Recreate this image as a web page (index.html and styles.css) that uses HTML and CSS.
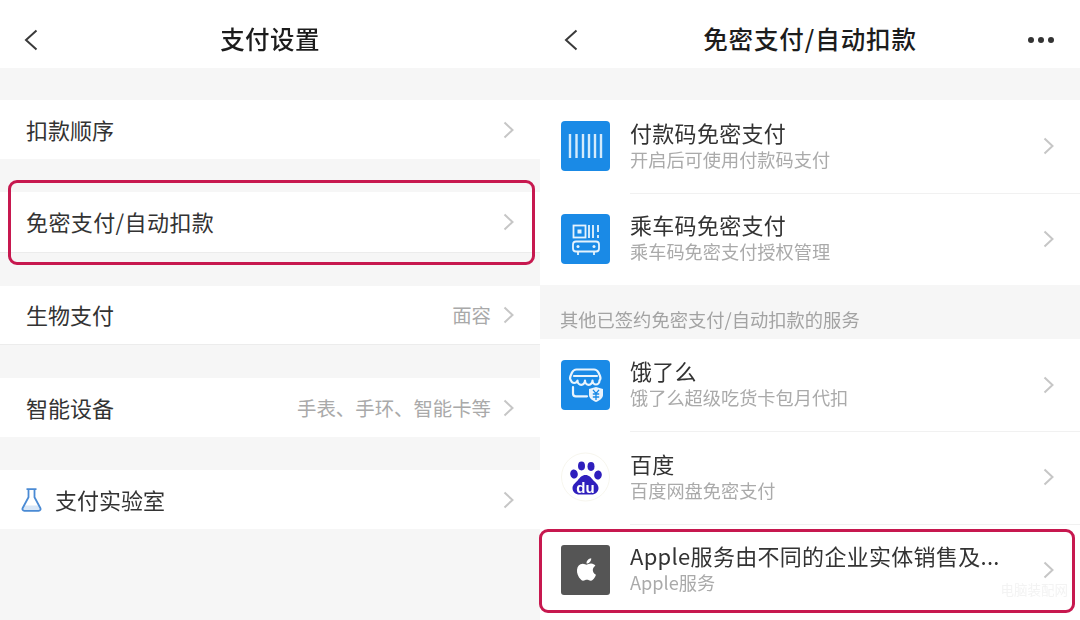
FILE: index.html
```html
<!DOCTYPE html>
<html lang="zh-CN">
<head>
    <meta charset="UTF-8">
    <meta name="viewport" content="width=device-width, initial-scale=1.0">
    <title>支付设置</title>
    <link rel="stylesheet" href="styles.css">
</head>
<body>
    <main class="screens">
        <section class="panel">
            <header class="nav">
                <svg class="nav__back" viewBox="0 0 14 22"><path d="M12.5 1.5 2 11l10.5 9.5"/></svg>
                <h1 class="nav__title">支付设置</h1>
            </header>
            <div class="settings">
                <div class="row">
                    <span class="row__label">扣款顺序</span>
                    <svg class="chevron" viewBox="0 0 11 18"><path d="M1.5 1.5 9.5 9l-8 7.5"/></svg>
                </div>
                <div class="row row--line row--marked">
                    <span class="row__label row__label--wide">免密支付/自动扣款</span>
                    <svg class="chevron" viewBox="0 0 11 18"><path d="M1.5 1.5 9.5 9l-8 7.5"/></svg>
                    <div class="highlight highlight--left"></div>
                </div>
                <div class="row row--line">
                    <span class="row__label">生物支付</span>
                    <span class="row__value">面容</span>
                    <svg class="chevron" viewBox="0 0 11 18"><path d="M1.5 1.5 9.5 9l-8 7.5"/></svg>
                </div>
                <div class="row">
                    <span class="row__label">智能设备</span>
                    <span class="row__value">手表、手环、智能卡等</span>
                    <svg class="chevron" viewBox="0 0 11 18"><path d="M1.5 1.5 9.5 9l-8 7.5"/></svg>
                </div>
                <div class="row row--lab">
                    <svg class="flask" viewBox="0 0 21 24">
                        <path class="flask__fill" d="M3 17.5h15l1.5 4.5h-18z"/>
                        <path class="flask__line" d="M5.5 1.2h10M7.5 1.2v8L1.7 20c-.7 1.4 0 2.8 1.7 2.8h14.2c1.700 0 2.400-1.400 1.700-2.800L13.500 9.200v-8"/>
                    </svg>
                    <span class="row__label">支付实验室</span>
                    <svg class="chevron" viewBox="0 0 11 18"><path d="M1.5 1.5 9.5 9l-8 7.5"/></svg>
                </div>
            </div>
        </section>

        <section class="panel">
            <header class="nav">
                <svg class="nav__back" viewBox="0 0 14 22"><path d="M12.5 1.5 2 11l10.5 9.5"/></svg>
                <h1 class="nav__title nav__title--wide">免密支付/自动扣款</h1>
                <div class="nav__more"><i></i><i></i><i></i></div>
            </header>
            <div class="services services--first">
                <div class="service">
                    <svg class="service__icon" viewBox="0 0 49 50">
                        <rect width="49" height="50" rx="4" fill="#1a8ae6"/>
                        <path d="M9 13v24M15.500 13v24M22 13v24M28 13v24M34 13v24M40 13v24" stroke="#d4ebfb" stroke-width="2.400" fill="none"/>
                    </svg>
                    <div class="service__text">
                        <div class="service__name">付款码免密支付</div>
                        <div class="service__sub">开启后可使用付款码支付</div>
                    </div>
                    <svg class="chevron" viewBox="0 0 11 18"><path d="M1.5 1.5 9.5 9l-8 7.5"/></svg>
                </div>
                <div class="service">
                    <svg class="service__icon" viewBox="0 0 49 50">
                        <rect width="49" height="50" rx="4" fill="#1a8ae6"/>
                        <g fill="none" stroke="#e6f3fd" stroke-width="1.800">
                            <rect x="12.500" y="11.500" width="12" height="12"/>
                            <path d="M28 11v13M32 11v13M37 11v7M37 21v3"/>
                            <path d="M15 27.500h20c2 0 3 1 3 3v4c0 2-1 3-3 3H15c-2 0-3-1-3-3v-4c0-2 1-3 3-3z"/>
                            <path d="M17 38v3M33 38v3"/>
                        </g>
                        <rect x="16.500" y="15.500" width="4" height="4" fill="#e6f3fd"/>
                        <circle cx="17" cy="32.500" r="1.500" fill="#e6f3fd"/>
                        <circle cx="33" cy="32.500" r="1.500" fill="#e6f3fd"/>
                    </svg>
                    <div class="service__text">
                        <div class="service__name">乘车码免密支付</div>
                        <div class="service__sub">乘车码免密支付授权管理</div>
                    </div>
                    <svg class="chevron" viewBox="0 0 11 18"><path d="M1.5 1.5 9.5 9l-8 7.5"/></svg>
                </div>
            </div>
            <div class="caption">其他已签约免密支付/自动扣款的服务</div>
            <div class="services services--fill">
                <div class="service">
                    <svg class="service__icon" viewBox="0 0 49 50">
                        <rect width="49" height="50" rx="4" fill="#1a8ae6"/>
                        <g fill="none" stroke="#e9f4fd" stroke-width="2.200" stroke-linejoin="round" stroke-linecap="round">
                            <path d="M16 9.500h17c2 0 3.500 1.200 4.500 3l1.500 3.500c.8 2 0 4-.5 4.500a3.500 4 0 0 1-7 0 3.500 4 0 0 1-7.500 0 3.500 4 0 0 1-7.500 0 3.500 4 0 0 1-6.500 0c-.5-.5-1.300-2.500-.5-4.500l1.500-3.500c1-1.800 2.500-3 4.500-3z"/>
                            <path d="M13 16h23"/>
                            <path d="M12 27v6.500c0 1.800 1 2.800 2.800 2.800H26"/>
                        </g>
                        <path d="M28 29 35 27l7 2v6c0 3.500-3.500 5.500-7 7-3.500-1.500-7-3.500-7-7z" fill="#e9f4fd"/>
                        <path d="M32 29.800 35 33.500l3-3.700M31.800 34h6.400M31.800 37h6.400M35 33.500V40" fill="none" stroke="#1a8ae6" stroke-width="1.300"/>
                    </svg>
                    <div class="service__text">
                        <div class="service__name">饿了么</div>
                        <div class="service__sub">饿了么超级吃货卡包月代扣</div>
                    </div>
                    <svg class="chevron" viewBox="0 0 11 18"><path d="M1.5 1.5 9.5 9l-8 7.5"/></svg>
                </div>
                <div class="service">
                    <svg class="service__icon" viewBox="0 0 49 50">
                        <circle cx="24.500" cy="25" r="24" fill="#fff" stroke="#f7f6ee"/>
                        <g fill="#2f1fbd">
                            <ellipse cx="13" cy="22" rx="3.800" ry="4.600" transform="rotate(-12 13 22)"/>
                            <ellipse cx="20.500" cy="14" rx="3.500" ry="4.400"/>
                            <ellipse cx="30" cy="14.500" rx="3.500" ry="4.400"/>
                            <ellipse cx="37" cy="23" rx="3.800" ry="4.600" transform="rotate(12 37 23)"/>
                            <path d="M24.500 23c3.500 0 5.500 2.500 7.500 5 2.500 2.500 5.500 4.500 5.500 8 0 4-3 6.500-7 6.500h-12c-4 0-7-2.500-7-6.500 0-3.500 3.500-5.500 5.500-8 2-2.500 4-5 7.500-5z"/>
                        </g>
                        <text class="baidu-du" x="24.500" y="40.500" text-anchor="middle">du</text>
                    </svg>
                    <div class="service__text">
                        <div class="service__name">百度</div>
                        <div class="service__sub">百度网盘免密支付</div>
                    </div>
                    <svg class="chevron" viewBox="0 0 11 18"><path d="M1.5 1.5 9.5 9l-8 7.5"/></svg>
                </div>
                <div class="service">
                    <svg class="service__icon" viewBox="0 0 49 50">
                        <rect width="49" height="50" rx="3" fill="#555"/>
                        <svg x="10.500" y="9.500" width="30" height="30" viewBox="0 0 24 24"><path fill="#fff" d="M17.050 20.280c-.98.95-2.050.8-3.080.35-1.090-.46-2.090-.48-3.240 0-1.440.62-2.200.44-3.060-.35C2.790 15.250 3.510 7.590 9.050 7.310c1.350.07 2.290.74 3.080.8 1.180-.24 2.310-.93 3.570-.84 1.510.12 2.650.72 3.400 1.800-3.120 1.870-2.380 5.980.48 7.130-.57 1.500-1.310 2.990-2.540 4.090zM12.030 7.250c-.15-2.230 1.660-4.070 3.740-4.250.29 2.580-2.340 4.500-3.740 4.250z"/></svg>
                    </svg>
                    <div class="service__text">
                        <div class="service__name">Apple服务由不同的企业实体销售及...</div>
                        <div class="service__sub">Apple服务</div>
                    </div>
                    <svg class="chevron" viewBox="0 0 11 18"><path d="M1.5 1.5 9.5 9l-8 7.5"/></svg>
                    <div class="highlight highlight--right"></div>
                    <div class="watermark">电脑装配网</div>
                </div>
            </div>
        </section>
    </main>
</body>
</html>
```

FILE: styles.css
```css
* {
    box-sizing: border-box;
}
html, body {
    margin: 0;
    height: 100%;
}
body {
    background-color: #f6f6f6;
    color: #333;
    font-family: "Noto Sans CJK SC", "Liberation Sans", sans-serif;
    overflow: hidden;
}
.screens {
    display: grid;
    grid-template-columns: 540px 540px;
    height: 620px;
    filter: blur(0.35px);
}
.panel {
    display: flex;
    flex-direction: column;
    height: 620px;
    min-width: 0;
}

/* nav bar */
.nav {
    position: relative;
    display: flex;
    align-items: center;
    justify-content: center;
    flex: 0 0 68px;
    padding-top: 11px;
    background-color: #fff;
}
.nav__title {
    margin: 0;
    color: #1c1c1c;
    font-size: 24.5px;
    font-weight: 500;
    letter-spacing: 0.4px;
    line-height: 1;
}
.nav__title--wide {
    letter-spacing: 0.9px;
}
.nav__back {
    position: absolute;
    left: 24px;
    top: 29px;
    width: 14px;
    height: 22px;
    fill: none;
    stroke: #3a3a3a;
    stroke-width: 2;
}
.nav__more {
    position: absolute;
    right: 26px;
    top: 37px;
    display: flex;
    gap: 4px;
}
.nav__more i {
    width: 6px;
    height: 6px;
    border-radius: 50%;
    background-color: #333;
}

/* left list */
.settings {
    display: flex;
    flex-direction: column;
    gap: 33px;
    padding-top: 32px;
}
.row {
    position: relative;
    display: flex;
    align-items: center;
    height: 59px;
    padding: 0 26px;
    background-color: #fff;
}
.row--marked {
    height: 61px;
}
.row--line {
    border-bottom: 1px solid #ececec;
}
.row--lab {
    gap: 13px;
    padding-left: 21px;
}
.row__label {
    flex: 1;
    padding-bottom: 2px;
    font-size: 22px;
    line-height: 1;
}
.row__label--wide {
    letter-spacing: 0.4px;
}
.row__value {
    margin-right: 12px;
    color: #a9a9a9;
    font-size: 19.4px;
    line-height: 1;
}
.chevron {
    flex: none;
    width: 11px;
    height: 18px;
    fill: none;
    stroke: #c6c6c6;
    stroke-width: 2;
}
.flask {
    flex: none;
    width: 21px;
    height: 24px;
}
.flask__fill {
    fill: #d8e6f6;
}
.flask__line {
    fill: none;
    stroke: #4a8ad4;
    stroke-width: 1.800;
}

/* right list */
.services {
    background-color: #fff;
}
.services--first {
    margin-top: 32px;
}
.services--fill {
    flex: 1;
}
.service {
    position: relative;
    display: flex;
    align-items: center;
    gap: 20px;
    height: 92.5px;
    padding: 0 26px 0 21px;
}
.service + .service::before {
    content: "";
    position: absolute;
    top: 0;
    left: 90px;
    right: 0;
    border-top: 1px solid #f1f1f1;
}
.service__icon {
    flex: none;
    width: 49px;
    height: 50px;
}
.service__text {
    flex: 1;
    min-width: 0;
    padding-bottom: 4px;
}
.service__name {
    color: #333;
    font-size: 22px;
    letter-spacing: 0.3px;
    line-height: 28px;
}
.service__sub {
    margin-top: 1px;
    color: #aaa;
    font-size: 18.2px;
    line-height: 24px;
}
.baidu-du {
    fill: #fff;
    font-family: "Liberation Sans", sans-serif;
    font-size: 15px;
    font-weight: 700;
}
.caption {
    height: 53.5px;
    padding: 23px 20px 0;
    color: #a3a3a3;
    font-size: 18.3px;
    line-height: 22px;
}

/* red marks drawn over the screenshot */
.highlight {
    position: absolute;
    border: 3.5px solid #c7184f;
    border-radius: 9px;
    pointer-events: none;
}
.highlight--left {
    top: -12.5px;
    bottom: -12.5px;
    left: 8px;
    right: 5px;
}
.highlight--right {
    top: 5.5px;
    bottom: 3.5px;
    left: -1px;
    right: 5px;
}
.watermark {
    position: absolute;
    right: 12px;
    bottom: 17px;
    color: #f3f3f3;
    font-size: 13.500px;
}
```
